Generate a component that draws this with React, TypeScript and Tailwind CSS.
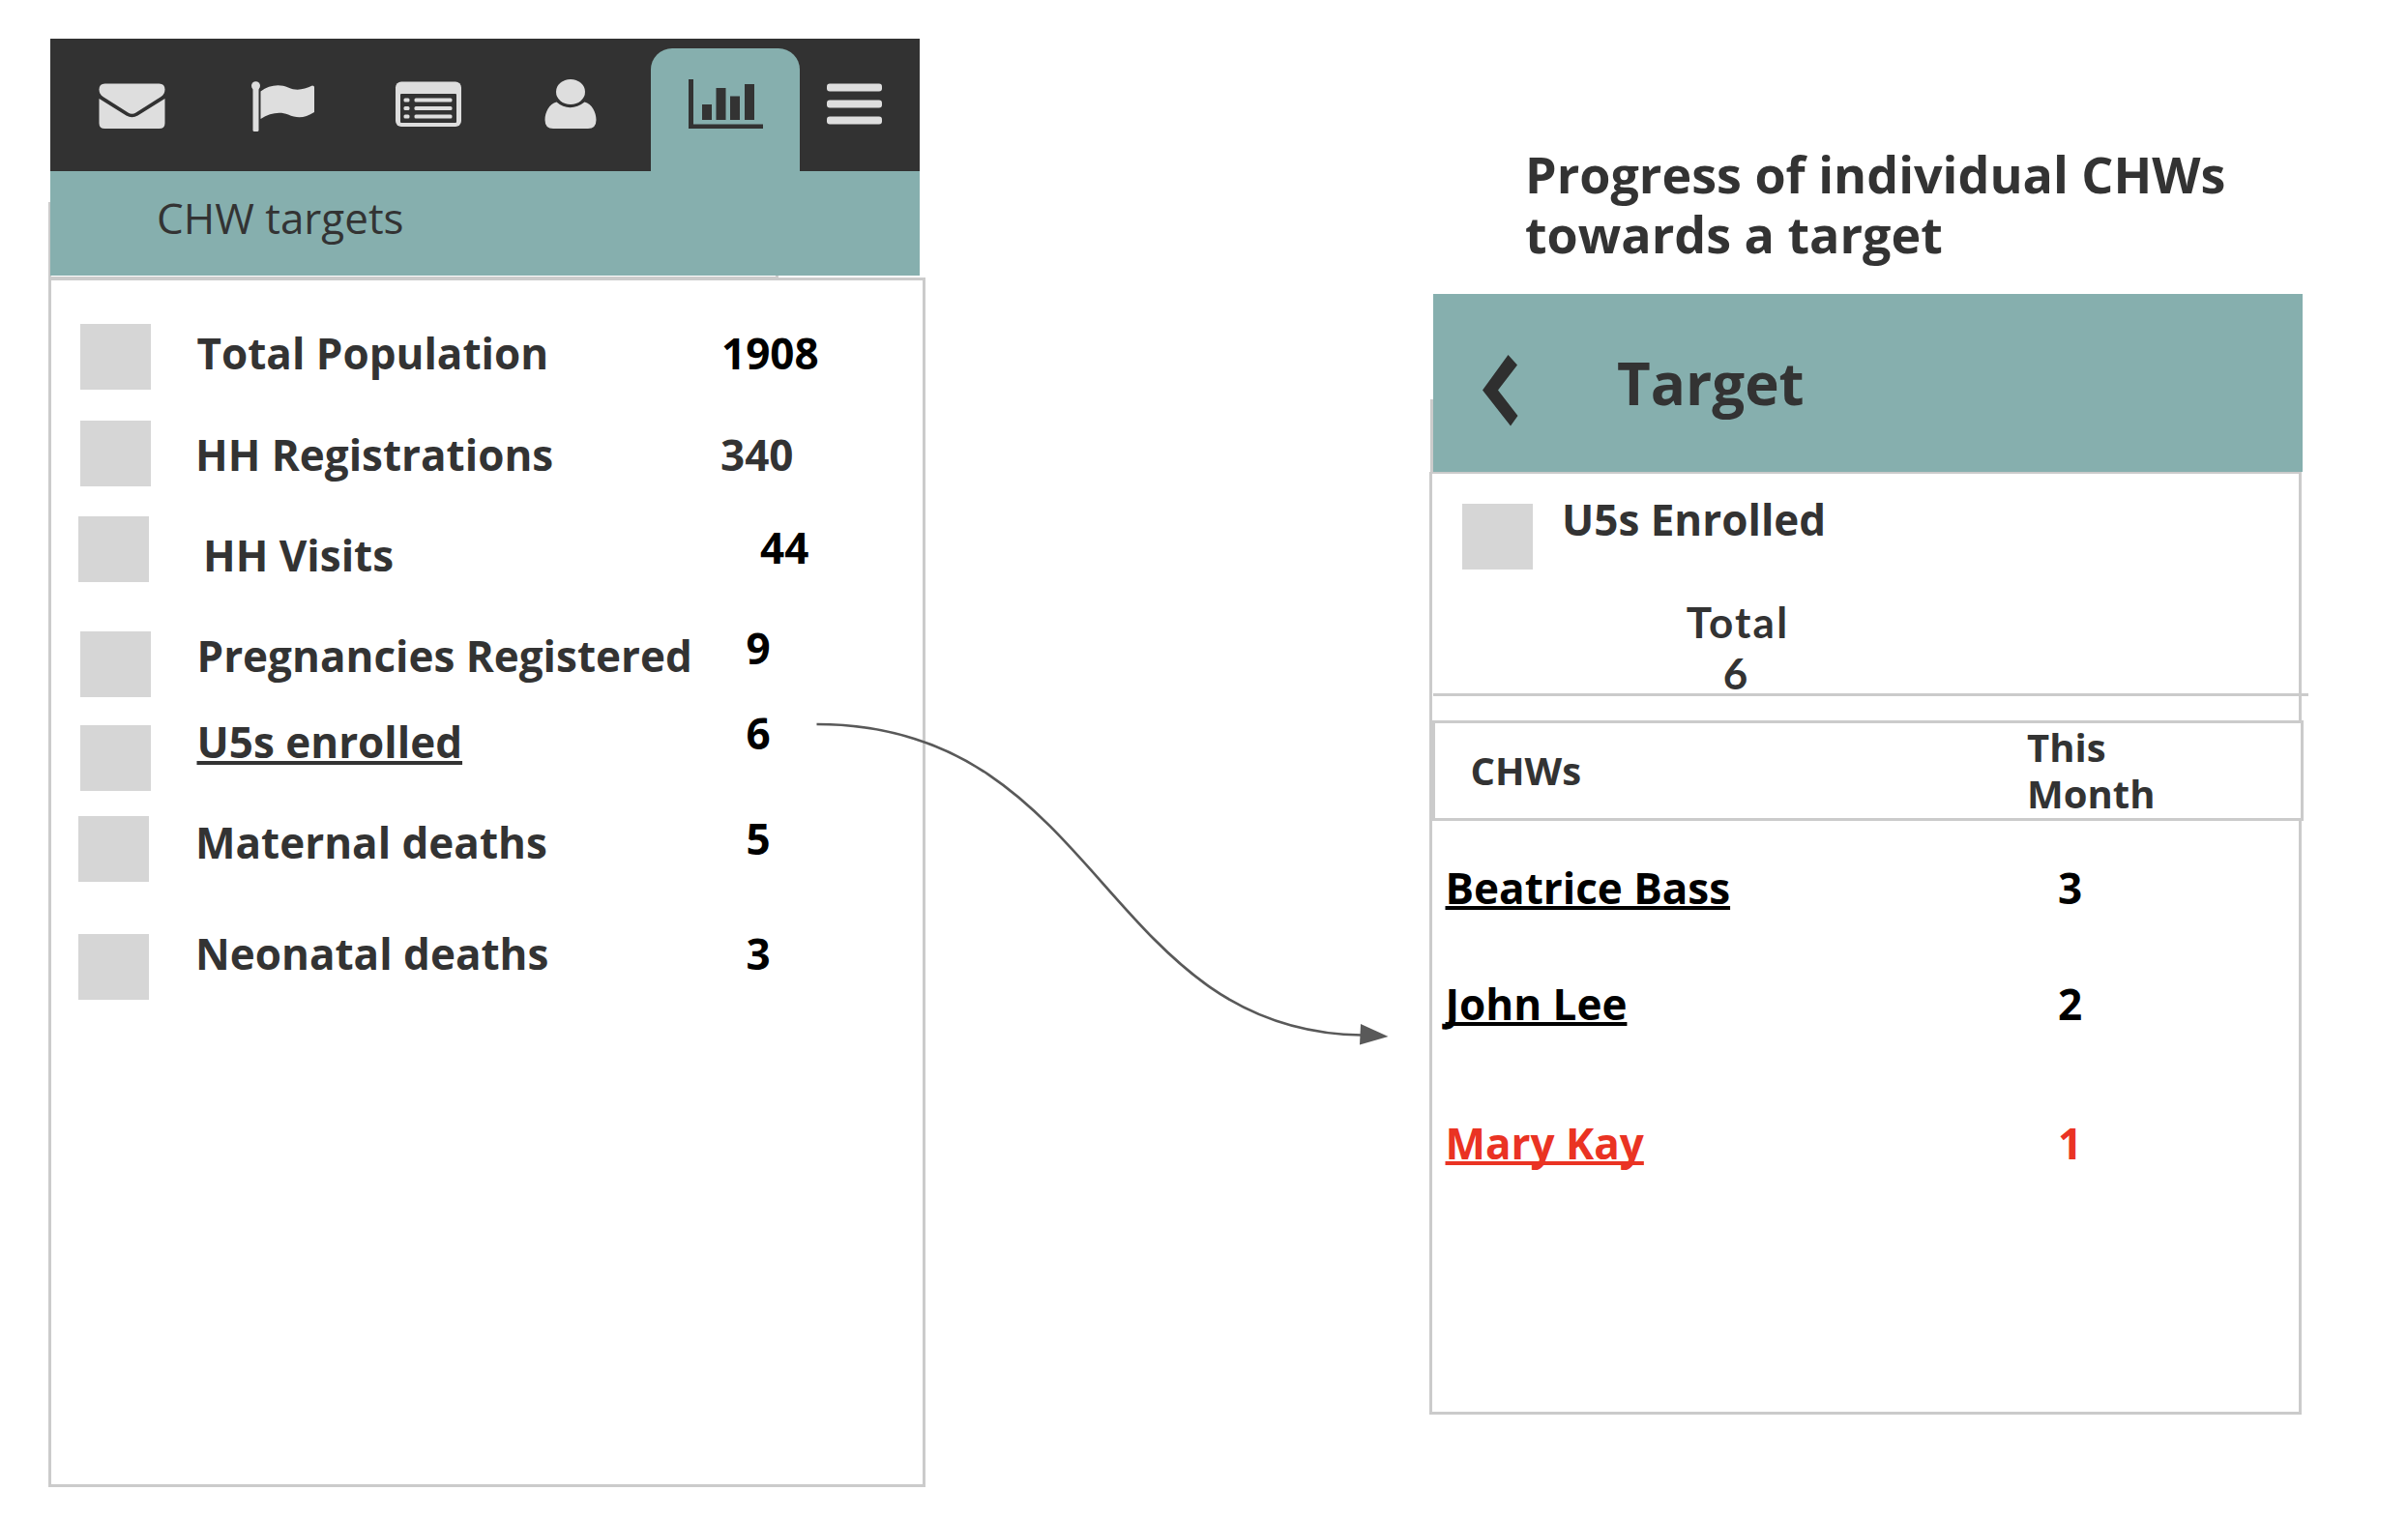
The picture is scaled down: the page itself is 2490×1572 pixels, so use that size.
import React from "react";

type Indicator = {
  label: string;
  value: string;
  row: string;
  swatch: string;
  labelClass: string;
  valueClass: string;
};

const indicators: Indicator[] = [
  { label: "Total Population", value: "1908", row: "h-[100px]", swatch: "", labelClass: "ml-[0.5px]", valueClass: "text-black" },
  { label: "HH Registrations", value: "340", row: "h-[99px]", swatch: "", labelClass: "mt-[5px] -ml-px", valueClass: "mt-[5px] -ml-px" },
  { label: "HH Visits", value: "44", row: "h-[106px]", swatch: "-ml-[2px]", labelClass: "mt-[10px] ml-[7px]", valueClass: "mt-[2px] ml-[40px] text-black" },
  { label: "Pregnancies Registered", value: "9", row: "h-[88px]", swatch: "mt-[13px]", labelClass: "mt-[8px] ml-[0.5px]", valueClass: "ml-[25.5px] text-black" },
  { label: "U5s enrolled", value: "6", row: "h-[109px]", swatch: "mt-[22px]", labelClass: "mt-[9px] ml-[0.5px] underline decoration-[4px] underline-offset-[3px] [text-decoration-skip-ink:none]", valueClass: "ml-[25.5px] text-black" },
  { label: "Maternal deaths", value: "5", row: "h-[119px]", swatch: "mt-[7px] -ml-[2px]", labelClass: "mt-[4px] -ml-px", valueClass: "ml-[25.5px] text-black" },
  { label: "Neonatal deaths", value: "3", row: "h-[80px]", swatch: "mt-[10px] -ml-[2px]", labelClass: "-ml-px", valueClass: "ml-[25.5px] text-black" },
];

const workers = [
  { name: "Beatrice Bass", count: "3", row: "h-[120px] text-black" },
  { name: "John Lee", count: "2", row: "h-[144px] text-black" },
  { name: "Mary Kay", count: "1", row: "h-[60px] text-[#ea3323]" },
];

function EnvelopeIcon() {
  return (
    <svg className="mt-[46px] ml-[50px] h-[48px] w-[70px] shrink-0" viewBox="0.5 0 70 48" fill="#dedede">
      <path d="M7 0.5H63Q69 0.5 69 6.500Q69 11 65 14L39 30.500Q35 33 31 30.500L5 14Q1 11 1 6.500Q1 0.500 7 0.500Z" />
      <path d="M1 16L29 33.500Q35 37 41 33.500L69 16V41.500Q69 47 63 47H7Q1 47 1 41.500Z" />
    </svg>
  );
}

function FlagIcon() {
  return (
    <svg className="mt-[44px] ml-[86px] h-[52px] w-[68px] shrink-0" viewBox="0 0 68 52" fill="#dedede">
      <circle cx="6.500" cy="4.800" r="4.500" />
      <rect x="3.500" y="5" width="6" height="47" rx="1.500" />
      <path d="M11.500 10.500C20 4 31 2.500 40 6.500C49 10.500 56 8.500 65 4.500Q67 4.500 67 6V32C57 38.500 49 38.500 40 34.500C31 31 21 33 11.500 39Z" />
    </svg>
  );
}

function ListIcon() {
  return (
    <svg className="mt-[44px] ml-[82px] h-[48px] w-[70px] shrink-0" viewBox="0 0 70 48">
      <rect x="1" y="0.500" width="68" height="46.500" rx="6" fill="#dedede" />
      <rect x="6" y="13" width="58" height="30" rx="1" fill="#323232" />
      <g fill="#dedede">
        <rect x="9.500" y="17.500" width="6" height="4" rx="1.500" />
        <rect x="9.500" y="26" width="6" height="4" rx="1.500" />
        <rect x="9.500" y="34.500" width="6" height="4" rx="1.500" />
        <rect x="20.500" y="17.500" width="39" height="4" rx="1.500" />
        <rect x="20.500" y="26" width="39" height="4" rx="1.500" />
        <rect x="20.500" y="34.500" width="39" height="4" rx="1.500" />
      </g>
    </svg>
  );
}

function PersonIcon() {
  return (
    <svg className="mt-[42px] ml-[84px] h-[51px] w-[56px] shrink-0" viewBox="0 0 56 51" fill="#dedede">
      <path d="M13.500 23.500C22 31 33 31 42.500 23.500C50 25.500 54.500 34 54.500 42Q54.500 51 46 51H10Q1.500 51 1.500 42C1.500 34 6 25.500 13.500 23.500Z" />
      <ellipse cx="28" cy="13" rx="15" ry="13" />
    </svg>
  );
}

function ChartIcon() {
  return (
    <svg className="ml-[39px] h-[51px] w-[78px]" viewBox="0 0 78 51" fill="#333333">
      <path d="M0 0H5V46.500H77V51H0Z" />
      <rect x="14" y="26" width="10" height="16" />
      <rect x="28.500" y="9" width="10" height="33" />
      <rect x="43" y="17.500" width="10" height="24.500" />
      <rect x="58" y="5" width="10" height="37" />
    </svg>
  );
}

function MenuIcon() {
  return (
    <svg className="mt-[46px] ml-[28px] h-[44px] w-[57px] shrink-0" viewBox="0 0 57 44" fill="#dedede">
      <rect x="0" y="0.500" width="57" height="8" rx="3" />
      <rect x="0" y="17.500" width="57" height="8" rx="3" />
      <rect x="0" y="34.500" width="57" height="8" rx="3" />
    </svg>
  );
}

function Connector() {
  return (
    <svg className="pointer-events-none absolute top-[740px] left-[840px] z-20 h-[350px] w-[600px]" viewBox="840 740 600 350">
      <path d="M844.500 749C1138 749 1140 1067 1408 1070.500" fill="none" stroke="#595959" strokeWidth="2.700" />
      <path d="M1407 1059L1435.500 1072L1406 1080.500Z" fill="#595959" />
    </svg>
  );
}

function TargetsScreen() {
  return (
    <section className="relative isolate ml-[50px] w-[907px] shrink-0 pt-[40px]">
      {/* card edge peeking out from behind the header */}
      <div className="absolute top-[209px] left-0 -z-10 h-[80px] w-[755px] border-[3px] border-[#cbcbcb]" />
      <div className="ml-[2px] w-[899px]">
        <nav className="flex h-[137px] items-start bg-[#323232]">
          <EnvelopeIcon />
          <FlagIcon />
          <ListIcon />
          <PersonIcon />
          <div className="mt-[10px] ml-[55px] h-[127px] w-[154px] shrink-0 rounded-t-[22px] bg-[#86afae] pt-[32px]">
            <ChartIcon />
          </div>
          <MenuIcon />
        </nav>
        <div className="h-[108px] bg-[#86afae] pt-[18px] pl-[110px] text-[44px] leading-[60px]">CHW targets</div>
      </div>
      <div className="mt-[2px] h-[1251px] border-[3px] border-[#cbcbcb] bg-white pt-[45px] pl-[30px] text-[44px] leading-[60px] font-bold">
        {indicators.map((item) => (
          <div key={item.label} className={`grid grid-cols-[120px_543px_1fr] items-start justify-items-start whitespace-nowrap ${item.row}`}>
            <div className={`h-[68px] w-[73px] bg-[#d6d6d6] ${item.swatch}`} />
            <div className={item.labelClass}>{item.label}</div>
            <div className={item.valueClass}>{item.value}</div>
          </div>
        ))}
      </div>
    </section>
  );
}

function TargetDetail() {
  return (
    <section className="relative isolate ml-[521px] w-[909px] shrink-0 pt-[149px]">
      <div className="absolute top-[413px] left-px -z-10 h-[76px] w-[300px] border-[3px] border-[#cbcbcb]" />
      <h1 className="ml-[99px] text-[52px] leading-[62px] font-bold whitespace-nowrap">
        Progress of individual CHWs
        <br />
        towards a target
      </h1>
      <header className="mt-[31px] ml-[4px] flex h-[184px] w-[899px] items-start bg-[#86afae]">
        <svg className="mt-[62px] ml-[50px] h-[76px] w-[40px]" viewBox="0 0 40 76" fill="#2f2f2f">
          <path d="M27.500 1L37 11.500L17 37.500L37.500 64L30 74.500L1 37.500Z" />
        </svg>
        <h2 className="mt-[51px] ml-[100px] text-[60px] leading-[82px] font-bold">Target</h2>
      </header>
      <div className="h-[975px] w-[902px] border-x-[3px] border-t-2 border-b-[3px] border-[#cbcbcb] font-bold">
        <div className="flex h-[126px] items-start pt-[17px] pl-[31px] text-[44px] leading-[60px]">
          <div className="mt-[14px] h-[68px] w-[73px] bg-[#d6d6d6]" />
          <div className="ml-[30px]">U5s Enrolled</div>
        </div>
        <div className="ml-[216px] h-[101px] w-[200px] pt-px text-center font-['Lato',sans-serif] text-[44px] leading-[53px]">
          <div className="tracking-[2.2px]">Total</div>
          <div className="-ml-[5px]">6</div>
        </div>
        <div className="ml-px h-[3px] w-[905px] bg-[#cbcbcb]" />
        <div className="mt-[25px] flex h-[104px] w-[901px] items-start border-[3px] border-[#cbcbcb] bg-white text-[40px]">
          <div className="mt-[22px] ml-[36.5px] w-[575.5px] leading-[54px]">CHWs</div>
          <div className="mt-px leading-[48px]">
            This
            <br />
            Month
          </div>
        </div>
        <div className="pt-[39px] pl-[13.5px] text-[44px] leading-[60px]">
          {workers.map((worker) => (
            <div key={worker.name} className={`grid grid-cols-[633.5px_1fr] items-start ${worker.row}`}>
              <a className="justify-self-start underline decoration-[4px] underline-offset-[2px] [text-decoration-skip-ink:none]">{worker.name}</a>
              <span>{worker.count}</span>
            </div>
          ))}
        </div>
      </div>
    </section>
  );
}

export default function App() {
  return (
    <main className="relative flex h-[1572px] w-[2490px] items-start overflow-hidden bg-white font-['Open_Sans',sans-serif] text-[#333333]">
      <TargetsScreen />
      <TargetDetail />
      <Connector />
    </main>
  );
}
